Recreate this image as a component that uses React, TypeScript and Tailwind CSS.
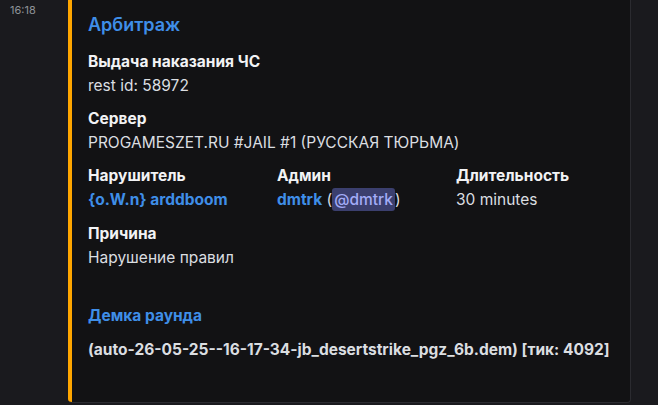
import React from "react";

const font = { fontFamily: "Inter, 'Noto Sans', sans-serif" };

function Field({ name, children }: { name: string; children: React.ReactNode }) {
  return (
    <div className="flex flex-col">
      <div className="text-[15.5px] leading-[20px] font-bold text-[#f2f3f5]">{name}</div>
      <div className="mt-[4px] text-[15.5px] leading-[20px] text-[#dbdee1] whitespace-nowrap">{children}</div>
    </div>
  );
}

export default function App() {
  return (
    <div style={font} className="w-[658px] h-[405px] bg-[#1a1a1e] overflow-hidden flex">
      <div className="w-[68px] shrink-0 pl-[10px] pt-[3px] text-[11px] leading-[14px] text-[#8e9297]">16:18</div>
      <div className="mt-[-10px] w-[563px] h-[413px] flex rounded-[4px] overflow-hidden border border-l-0 border-[#2b2b30] bg-[#121214]">
        <div className="w-[4px] shrink-0 bg-[#ffa600]" />
        <div className="flex-1 pl-[16px] pr-[8px] pt-[22px] flex flex-col">
          <div className="text-[18px] leading-[24px] font-semibold text-[#3f8ee8]">Арбитраж</div>
          <div className="mt-[15px] flex flex-col gap-[13px]">
            <Field name="Выдача наказания ЧС">rest id: 58972</Field>
            <Field name="Сервер">PROGAMESZET.RU #JAIL #1 (РУССКАЯ ТЮРЬМА)</Field>
            <div className="grid grid-cols-[189px_179px_1fr]">
              <Field name="Нарушитель">
                <span className="font-bold text-[#3f8ee8]">{"{o.W.n} arddboom"}</span>
              </Field>
              <Field name="Админ">
                <span className="font-bold text-[#3f8ee8]">dmtrk</span>
                <span> (</span>
                <span className="rounded-[3px] bg-[#3b3f6e] text-[#a3acf7] px-[2px] py-[2px] font-medium">@dmtrk</span>
                <span>)</span>
              </Field>
              <Field name="Длительность">30 minutes</Field>
            </div>
            <div className="mt-[1px]">
              <Field name="Причина">Нарушение правил</Field>
            </div>
          </div>
          <div className="mt-[38px] text-[15.5px] leading-[20px] font-bold text-[#3f8ee8]">Демка раунда</div>
          <div className="mt-[14px] text-[15.5px] leading-[20px] font-bold text-[#dbdee1] whitespace-nowrap">
            (auto-26-05-25--16-17-34-jb_desertstrike_pgz_6b.dem) [тик: 4092]
          </div>
        </div>
      </div>
    </div>
  );
}
